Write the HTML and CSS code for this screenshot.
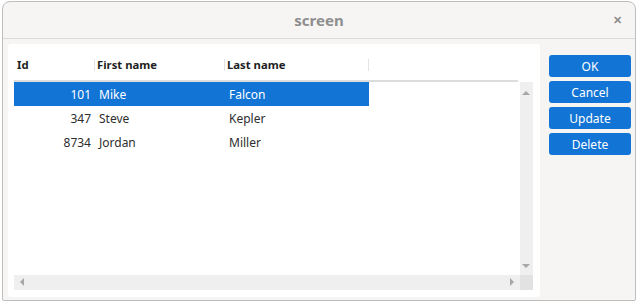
FILE: index.html
```html
<!DOCTYPE html>
<html>
<head>
  <title>screen</title>
  <link rel="stylesheet" href="styles.css">
</head>
<body>
  <div class="window">
    <div class="titlebar">
      <span class="title">screen</span>
      <span class="close">&#x2715;</span>
    </div>
    <div class="content">
      <div class="panel">
        <div class="grid">
          <div class="header">
            <div class="cell col-id">Id</div>
            <div class="cell col-first">First name</div>
            <div class="cell col-last">Last name</div>
          </div>
          <div class="body">
            <div class="rows">
              <div class="row selected">
                <div class="cell col-id">101</div>
                <div class="cell col-first">Mike</div>
                <div class="cell col-last">Falcon</div>
              </div>
              <div class="row">
                <div class="cell col-id">347</div>
                <div class="cell col-first">Steve</div>
                <div class="cell col-last">Kepler</div>
              </div>
              <div class="row">
                <div class="cell col-id">8734</div>
                <div class="cell col-first">Jordan</div>
                <div class="cell col-last">Miller</div>
              </div>
            </div>
            <div class="vscroll">
              <span class="arrow up"></span>
              <span class="arrow down"></span>
            </div>
          </div>
          <div class="hscroll-row">
            <div class="hscroll">
              <span class="arrow left"></span>
              <span class="arrow right"></span>
            </div>
            <div class="corner"></div>
          </div>
        </div>
      </div>
      <div class="buttons">
        <button class="btn">OK</button>
        <button class="btn">Cancel</button>
        <button class="btn">Update</button>
        <button class="btn">Delete</button>
      </div>
    </div>
  </div>
</body>
</html>
```

FILE: styles.css
```css
/* dialog window */
body {
  margin: 0;
  background: #ffffff;
  font-family: "Noto Sans", sans-serif;
  font-size: 12px;
  color: #2e2e2e;
}

.window {
  margin: 1px 2px 0 2px;
  height: 300px;
  border: 1px solid #bdbdbd;
  border-radius: 8px 8px 2px 2px;
  background: #f6f5f4;
  display: flex;
  flex-direction: column;
  box-sizing: border-box;
}

.titlebar {
  height: 36px;
  border-bottom: 1px solid #dcdad7;
  display: flex;
  align-items: center;
  justify-content: center;
  position: relative;
  flex-shrink: 0;
}

.title {
  font-size: 15px;
  font-weight: bold;
  color: #8e8e8e;
}

.close {
  position: absolute;
  right: 13px;
  top: 10px;
  font-size: 11px;
  font-weight: bold;
  color: #8e8e8e;
}

.content {
  display: flex;
  padding: 5px 3px 0 5px;
}

/* table panel */
.panel {
  width: 532px;
  height: 253px;
  background: #ffffff;
  border-radius: 3px;
  padding: 6px 7px 7px 6px;
  box-sizing: border-box;
}

.grid {
  display: flex;
  flex-direction: column;
  height: 100%;
}

.header {
  display: flex;
  height: 30px;
  align-items: center;
  border-bottom: 2px solid #dcdcdc;
  margin-right: 15px;
  font-weight: bold;
  font-size: 11.3px;
  color: #1e1e1e;
}

.cell {
  box-sizing: border-box;
}

.header .cell {
  height: 12px;
  line-height: 12px;
  border-right: 1px solid #e4e4e4;
  padding-left: 3px;
}

.header .col-id { width: 81px; }
.header .col-first { width: 130px; padding-left: 2px; }
.header .col-last { width: 144px; padding-left: 2px; }

.body {
  flex: 1;
  display: flex;
}

.rows {
  flex: 1;
}

.row {
  display: flex;
  height: 24px;
  align-items: center;
  width: 355px;
}

.row .col-id {
  width: 81px;
  text-align: right;
  padding-right: 4px;
}

.row .col-first {
  width: 130px;
  padding-left: 4px;
}

.row .col-last {
  width: 144px;
  padding-left: 4px;
}

.row.selected {
  background: #1274d5;
  color: #ffffff;
}

.vscroll {
  width: 13px;
  background: #efefef;
  position: relative;
}

.hscroll-row {
  display: flex;
  height: 15px;
}

.hscroll {
  flex: 1;
  background: #efefef;
  position: relative;
}

.corner {
  width: 13px;
  background: #e2e2e2;
}

/* scroll arrows */
.arrow {
  position: absolute;
  width: 0;
  height: 0;
  border: 4px solid transparent;
}

.arrow.up {
  top: 5px;
  left: 2px;
  border-bottom: 4px solid #a6a6a6;
}

.arrow.down {
  bottom: 3px;
  left: 2px;
  border-top: 4px solid #a6a6a6;
}

.arrow.left {
  left: 2px;
  top: 3px;
  border-right: 4px solid #a6a6a6;
}

.arrow.right {
  right: 2px;
  top: 3px;
  border-left: 4px solid #a6a6a6;
}

/* side buttons */
.buttons {
  display: flex;
  flex-direction: column;
  gap: 4px;
  margin-left: 9px;
  padding-top: 11px;
}

.btn {
  width: 82px;
  height: 22px;
  border: none;
  border-radius: 3px;
  background: #1274d5;
  color: #ffffff;
  font-family: "Noto Sans", sans-serif;
  font-size: 12px;
  padding: 0;
}
```
